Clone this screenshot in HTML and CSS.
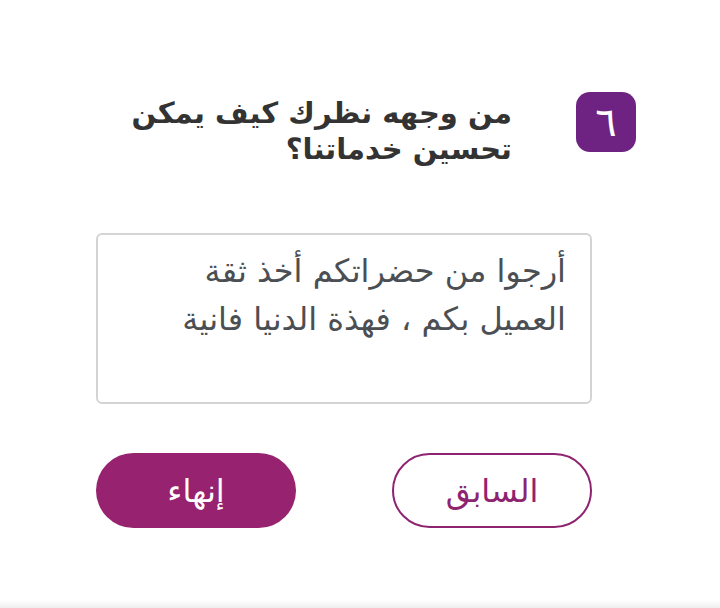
FILE: index.html
```
<!DOCTYPE html>
<html lang="ar" dir="rtl">
<head>
<meta charset="utf-8">
<link rel="stylesheet" href="styles.css">
</head>
<body>
<main class="page">
  <div class="question">
    <div class="badge">٦</div>
    <h2 class="title">من وجهه نظرك كيف يمكن<br>تحسين خدماتنا؟</h2>
  </div>
  <div class="answer">
    <textarea class="field">أرجوا من حضراتكم أخذ ثقة العميل بكم ، فهذة الدنيا فانية</textarea>
  </div>
  <div class="actions">
    <button class="btn btn-outline">السابق</button>
    <button class="btn btn-fill">إنهاء</button>
  </div>
</main>
<div class="bottom-shade"></div>
</body>
</html>
```
FILE: styles.css
```
html, body {
  margin: 0;
  padding: 0;
  background: #fff;
  height: 608px;
  overflow: hidden;
}
body {
  font-family: "DejaVu Sans", "Noto Sans", sans-serif;
  position: relative;
}
.page {
  padding-top: 92px;
}
.question {
  display: flex;
  align-items: flex-start;
  gap: 64px;
  padding-right: 84px;
}
.badge {
  width: 60px;
  height: 60px;
  flex: none;
  border-radius: 14px;
  background: #6e2382;
  color: #fff;
  font-size: 40px;
  line-height: 1;
  display: flex;
  align-items: center;
  justify-content: center;
}
.title {
  margin: 0;
  padding-top: 3px;
  font-size: 29px;
  line-height: 36px;
  font-weight: bold;
  color: #333;
}
.answer {
  margin-top: 66px;
  margin-right: 128px;
  width: 496px;
}
.field {
  display: block;
  box-sizing: border-box;
  width: 496px;
  height: 171px;
  border: 2px solid #d4d4d6;
  border-radius: 6px;
  padding: 12px 24px 10px 40px;
  font-family: "DejaVu Sans", sans-serif;
  font-size: 32px;
  line-height: 48px;
  color: #4b4f54;
  resize: none;
  direction: rtl;
  overflow: hidden;
}
.actions {
  margin-top: 49px;
  margin-right: 128px;
  width: 496px;
  display: flex;
  justify-content: space-between;
}
.btn {
  width: 200px;
  height: 75px;
  border-radius: 38px;
  font-family: "DejaVu Sans", sans-serif;
  font-size: 32px;
  box-sizing: border-box;
}
.btn-outline {
  background: #fff;
  border: 2px solid #8e2470;
  color: #8e2470;
}
.btn-fill {
  background: #97226f;
  border: none;
  color: #fff;
}
.bottom-shade {
  position: absolute;
  left: 0;
  right: 0;
  bottom: 0;
  height: 8px;
  background: linear-gradient(#fff, #eeeeee);
}
```
